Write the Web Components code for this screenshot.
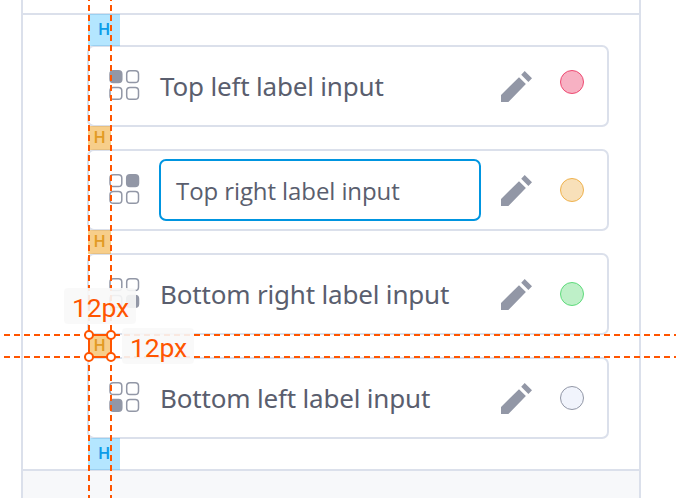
<!DOCTYPE html>
<html lang="en"><head><meta charset="utf-8"><title>Label inputs</title>
<style>
html,body{margin:0;background:#fff;overflow:hidden}
body{width:676px;height:498px;position:relative;font-family:"Noto Sans","Open Sans",sans-serif;color:#5a5e6e}
</style></head><body>
<label-panel>
<label-row corner="0" fill="#f7b1c3" line="#ee4b72" lift="4">Top left label input</label-row>
<label-row corner="1" fill="#f8e0b9" line="#efb24d" editing>Top right label input</label-row>
<label-row corner="3" fill="#bef0c8" line="#5fdb7c">Bottom right label input</label-row>
<label-row corner="2" fill="#f1f4fc" line="#9297a6">Bottom left label input</label-row>
</label-panel>
<spacing-guides></spacing-guides>
<script>
customElements.define('label-panel', class extends HTMLElement{
 constructor(){super();this.attachShadow({mode:'open'}).innerHTML=`<style>
 :host{display:grid;grid-template-rows:13px 458px 27px;box-sizing:border-box;width:620px;height:498px;margin-left:21px;border:solid #dbe0eb;border-width:0 2px}
 main{box-sizing:border-box;border:solid #dbe0eb;border-width:2px 0;padding:30px 30px 0 64px;display:flex;flex-direction:column;gap:22px}
 footer{background:#f7f8fa}</style><header></header><main><slot></slot></main><footer></footer>`}
});
customElements.define('corner-icon', class extends HTMLElement{
 connectedCallback(){const on=+this.getAttribute('corner');
 let r='';for(let i=0;i<4;i++){r+=`<rect x="${1+(i%2)*16.7}" y="${.8+(i>>1)*16.7}" width="11.8" height="11.8" rx="3.3" fill="${i===on?'#9297a6':'none'}"/>`}
 this.attachShadow({mode:'open'}).innerHTML=`<style>:host{display:block;width:31px;height:31px}svg{display:block}</style><svg width="31" height="31" stroke="#9297a6" stroke-width="1.5">${r}</svg>`}
});
customElements.define('pencil-icon', class extends HTMLElement{
 constructor(){super();this.attachShadow({mode:'open'}).innerHTML=`<style>:host{display:block;width:31px;height:31px}svg{display:block}</style><svg width="31" height="31" fill="#9297a6"><path d="M0 31V24L18 6.2 24.9 13 7.4 31ZM23.7 0 31 7.3 27.4 10.9 20.2 3.7Z"/></svg>`}
});
customElements.define('label-row', class extends HTMLElement{
 connectedCallback(){const a=n=>this.getAttribute(n),ed=this.hasAttribute('editing');
 this.attachShadow({mode:'open'}).innerHTML=`<style>
 :host{display:flex;align-items:flex-start;box-sizing:border-box;width:522px;height:82px;border:2px solid #dbe0eb;border-radius:7px;padding-left:20px}
 corner-icon{margin-top:23px}
 .name{box-sizing:border-box;flex:none;width:322px;height:62px;margin:8px 20px 0 19px;border:2px solid transparent;border-radius:7px;font-size:26px;line-height:58px;letter-spacing:-.18px;text-indent:-1px;white-space:nowrap}
 .edit{border-color:#0095e0;font-family:"Open Sans","Noto Sans",sans-serif;font-size:24px;line-height:60px;letter-spacing:-.09px;text-indent:0;padding-left:15px}
 pencil-icon{margin-top:24px}
 .dot{box-sizing:border-box;width:24px;height:24px;border-radius:50%;margin:${27-(+a('lift')||0)}px 0 0 28px;background:${a('fill')};border:1px solid ${a('line')}}
 </style><corner-icon corner="${a('corner')}"></corner-icon><div class="name ${ed?'edit':''}"><slot></slot></div><pencil-icon></pencil-icon><span class="dot"></span>`}
});
customElements.define('spacing-guides', class extends HTMLElement{
 constructor(){super();this.attachShadow({mode:'open'}).innerHTML=`<style>
 :host{position:absolute;inset:0;font-family:Roboto,sans-serif}
 svg{position:absolute;inset:0}
 .h{position:absolute;box-sizing:border-box;display:flex;align-items:center;justify-content:center;font-size:16.5px;font-weight:500;line-height:20px}
 .b{left:88px;width:32px;height:32px;background:#00aaff4b;color:#0c9ce8}
 .o{left:88px;width:23px;height:24px;background:#f0a21e85;color:#e29b25}
 .m{position:absolute;box-sizing:border-box;width:72px;height:36px;border-radius:4px;background:#f8f8f8e6;color:#ff5500;font-size:26.5px;letter-spacing:-.2px;line-height:39px;text-indent:1px;text-align:center}
 </style>
 <div class="h b" style="top:14px">H</div><div class="h o" style="top:126px">H</div><div class="h o" style="top:230px">H</div><div class="h o" style="top:334px">H</div><div class="h b" style="top:438px">H</div>
 <svg width="676" height="498" fill="none" stroke="#ff5500" stroke-width="2"><path stroke-dasharray="6 4" d="M89-5V498M111-5V498M4 335H676M4 357H676"/><rect x="89" y="335" width="22" height="22"/><g fill="#fff"><circle cx="89" cy="335" r="4"/><circle cx="111" cy="335" r="4"/><circle cx="89" cy="357" r="4"/><circle cx="111" cy="357" r="4"/></g></svg>
 <div class="m" style="left:64px;top:288px">12px</div><div class="m" style="left:122px;top:328px">12px</div>`}
});
</script></body></html>
